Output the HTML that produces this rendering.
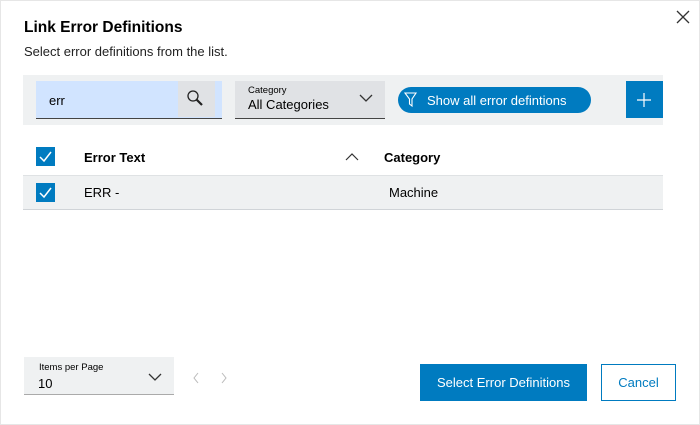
<!DOCTYPE html>
<html><head><style>
*{box-sizing:border-box;margin:0;padding:0}
body{width:700px;height:425px;background:#fff;font-family:"Liberation Sans",sans-serif;color:#000;position:relative;overflow:hidden}
.a{position:absolute}
.cb{position:absolute;width:19px;height:19px;background:#007bc0}
</style></head><body>
<div class="a" style="left:0;top:0;width:700px;height:425px;border:1px solid #e6e6e6"></div>
<div class="a" style="left:24px;top:19px;font-size:15.5px;font-weight:bold">Link Error Definitions</div>
<div class="a" style="left:24px;top:44px;font-size:13px;color:#222">Select error definitions from the list.</div>
<svg class="a" style="left:676px;top:10px" width="14" height="14"><path d="M1 1L13 13M13 1L1 13" stroke="#333" stroke-width="1.3"/></svg>

<div class="a" style="left:23px;top:75px;width:640px;height:50px;background:#eff1f2"></div>
<div class="a" style="left:36px;top:81px;width:186px;height:38px;background:#d1e4ff;border-bottom:1.5px solid #444"></div>
<div class="a" style="left:178px;top:81px;width:37px;height:36px;background:#e0e2e5"></div>
<svg class="a" style="left:186px;top:89px" width="20" height="20"><circle cx="7" cy="7" r="5" fill="none" stroke="#222" stroke-width="1.3"/><path d="M10.5 10.5L16 16" stroke="#222" stroke-width="2.2"/></svg>
<div class="a" style="left:49px;top:93px;font-size:13px">err</div>
<div class="a" style="left:235px;top:81px;width:150px;height:38px;background:#e0e2e5;border-bottom:1.5px solid #444"></div>
<div class="a" style="left:248px;top:85px;font-size:9.5px">Category</div>
<div class="a" style="left:248px;top:97px;font-size:13px">All Categories</div>
<svg class="a" style="left:359px;top:94px" width="14" height="9"><path d="M1 1L7 7L13 1" fill="none" stroke="#333" stroke-width="1.3"/></svg>
<div class="a" style="left:398px;top:87px;width:193px;height:26px;border-radius:13px;background:#007bc0"></div>
<svg class="a" style="left:404px;top:91px" width="14" height="18"><path d="M1 2H12L8 8V15L5.5 13V8Z" fill="none" stroke="#fff" stroke-width="1.1"/></svg>
<div class="a" style="left:427px;top:93px;font-size:13px;color:#fff">Show all error defintions</div>
<div class="a" style="left:626px;top:81px;width:37px;height:37px;background:#007bc0"></div>
<svg class="a" style="left:637px;top:93px" width="14" height="14"><path d="M7 0V14M0 7H14" stroke="#fff" stroke-width="1.2"/></svg>

<div class="cb" style="left:36px;top:147px"></div>
<svg class="a" style="left:36px;top:147px" width="19" height="19"><path d="M4 10L8 14L15 5" fill="none" stroke="#fff" stroke-width="1.5"/></svg>
<div class="a" style="left:84px;top:150px;font-size:13px;font-weight:bold">Error Text</div>
<svg class="a" style="left:345px;top:153px" width="14" height="8"><path d="M1 7L7 1L13 7" fill="none" stroke="#333" stroke-width="1.2"/></svg>
<div class="a" style="left:384px;top:150px;font-size:13px;font-weight:bold">Category</div>
<div class="a" style="left:23px;top:175px;width:640px;height:35px;background:#eff1f2;border-top:1px solid #dfe2e4;border-bottom:1.5px solid #d0d4d8"></div>
<div class="cb" style="left:36px;top:183px"></div>
<svg class="a" style="left:36px;top:183px" width="19" height="19"><path d="M4 10L8 14L15 5" fill="none" stroke="#fff" stroke-width="1.5"/></svg>
<div class="a" style="left:84px;top:185px;font-size:13px">ERR -</div>
<div class="a" style="left:389px;top:185px;font-size:13px">Machine</div>

<div class="a" style="left:24px;top:357px;width:150px;height:38px;background:#eff1f2;border-bottom:1.5px solid #aaa"></div>
<div class="a" style="left:39px;top:362px;font-size:9.5px">Items per Page</div>
<div class="a" style="left:38px;top:376px;font-size:13px">10</div>
<svg class="a" style="left:148px;top:373px" width="14" height="9"><path d="M1 1L7 7L13 1" fill="none" stroke="#333" stroke-width="1.3"/></svg>
<svg class="a" style="left:192px;top:372px" width="40" height="12"><path d="M6 1L2 6L6 11M30 1L34 6L30 11" fill="none" stroke="#bbb" stroke-width="1"/></svg>
<div class="a" style="left:420px;top:364px;width:167px;height:37px;background:#007bc0;color:#fff;font-size:13px;text-align:center;line-height:37px">Select Error Definitions</div>
<div class="a" style="left:601px;top:364px;width:75px;height:37px;border:1px solid #007bc0;color:#007bc0;font-size:13px;text-align:center;line-height:35px">Cancel</div>
</body></html>
